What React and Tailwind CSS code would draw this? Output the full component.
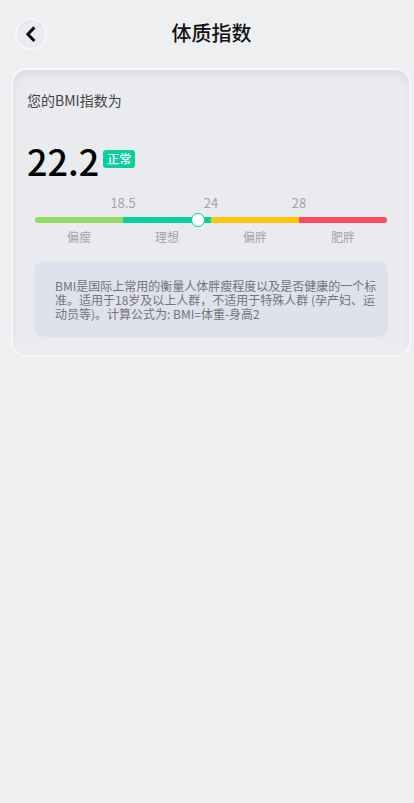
const RANGES = [
  { label: '偏瘦', color: 'bg-[#91db63] rounded-l-full', limit: '18.5' },
  { label: '理想', color: 'bg-[#06cfa0]', limit: '24' },
  { label: '偏胖', color: 'bg-[#ffc408]', limit: '28' },
  { label: '肥胖', color: 'bg-[#ff4963] rounded-r-full', limit: '' },
]

// the marker runs linearly over the bar, 24 sits in the middle
const MAX_BMI = 48

function Header() {
  return (
    <header className="grid grid-cols-[32px_1fr_32px] items-center pl-[15px] pr-[6px] pt-[18px]">
      <button
        type="button"
        aria-label="返回"
        className="flex size-8 items-center justify-center rounded-full border-2 border-[#f5f6f8] bg-[#ebecf0] shadow-[inset_0_1px_3px_#dfe1e8]"
      >
        <svg viewBox="0 0 16 16" className="size-4" fill="none" stroke="#080808" strokeWidth="3">
          <path d="M11.4 1.4 4.8 8.2l6.6 6.8" strokeLinejoin="round" />
        </svg>
      </button>
      <h1 className="pb-[2px] text-center text-[20px] leading-7 font-medium text-[#111]">体质指数</h1>
    </header>
  )
}

function BmiScale({ bmi }) {
  return (
    <div className="mx-2 mt-[13px]">
      <div className="grid grid-cols-4 text-[13px] leading-4 text-[#a2a3a5]">
        {RANGES.map(r => (
          <div key={r.label} className="flex justify-end">
            <span className="w-0 flex justify-center">{r.limit}</span>
          </div>
        ))}
      </div>
      <div className="relative mt-[6px] grid h-[6px] grid-cols-4">
        {RANGES.map(r => (
          <div key={r.label} className={r.color} />
        ))}
        <span
          className="absolute top-1/2 size-[14px] -translate-x-1/2 -translate-y-1/2 rounded-full border border-[#06cfa0] bg-white"
          style={{ left: `${(bmi / MAX_BMI) * 100}%` }}
        />
      </div>
      <div className="mt-[6px] grid grid-cols-4 text-center text-[12px] leading-4 text-[#a2a3a5]">
        {RANGES.map(r => (
          <span key={r.label}>{r.label}</span>
        ))}
      </div>
    </div>
  )
}

export default function App() {
  const bmi = 22.2

  return (
    <div
      lang="zh-CN"
      className="min-h-screen bg-[#eeeff1] font-['Noto_Sans_CJK_SC',sans-serif]"
    >
      <Header />
      <main className="ml-[11px] mr-[3px] mt-[18px] rounded-[16px] border-2 border-[#f5f6f8] bg-[#eaebef] px-[14px] pb-[18px] shadow-[inset_0_7px_8px_-4px_#d5d8e1,inset_0_0_8px_#e4e6eb,inset_0_-12px_12px_-4px_#eeeff1]">
        <p className="pt-5 text-[14px] leading-5 text-[#444]">您的BMI指数为</p>

        <div className="mt-7 flex items-start">
          <span className="text-[36px] leading-[44px] font-medium text-black">{bmi}</span>
          <span className="ml-1 mt-3 rounded-[3px] bg-[#06cfa0] px-1 text-[12px] leading-[18px] font-medium text-white">
            正常
          </span>
        </div>

        <BmiScale bmi={bmi} />

        <p className="mx-[7px] mt-4 rounded-[10px] bg-[#dfe1ed] pb-4 pl-[21px] pr-2 pt-[18px] text-[12px] leading-[14px] text-[#737477]">
          BMI是国际上常用的衡量人体胖瘦程度以及是否健康的一个标准。适用于18岁及以上人群，不适用于特殊人群 (孕产妇、运动员等)。计算公式为: BMI=体重-身高2
        </p>
      </main>
    </div>
  )
}
